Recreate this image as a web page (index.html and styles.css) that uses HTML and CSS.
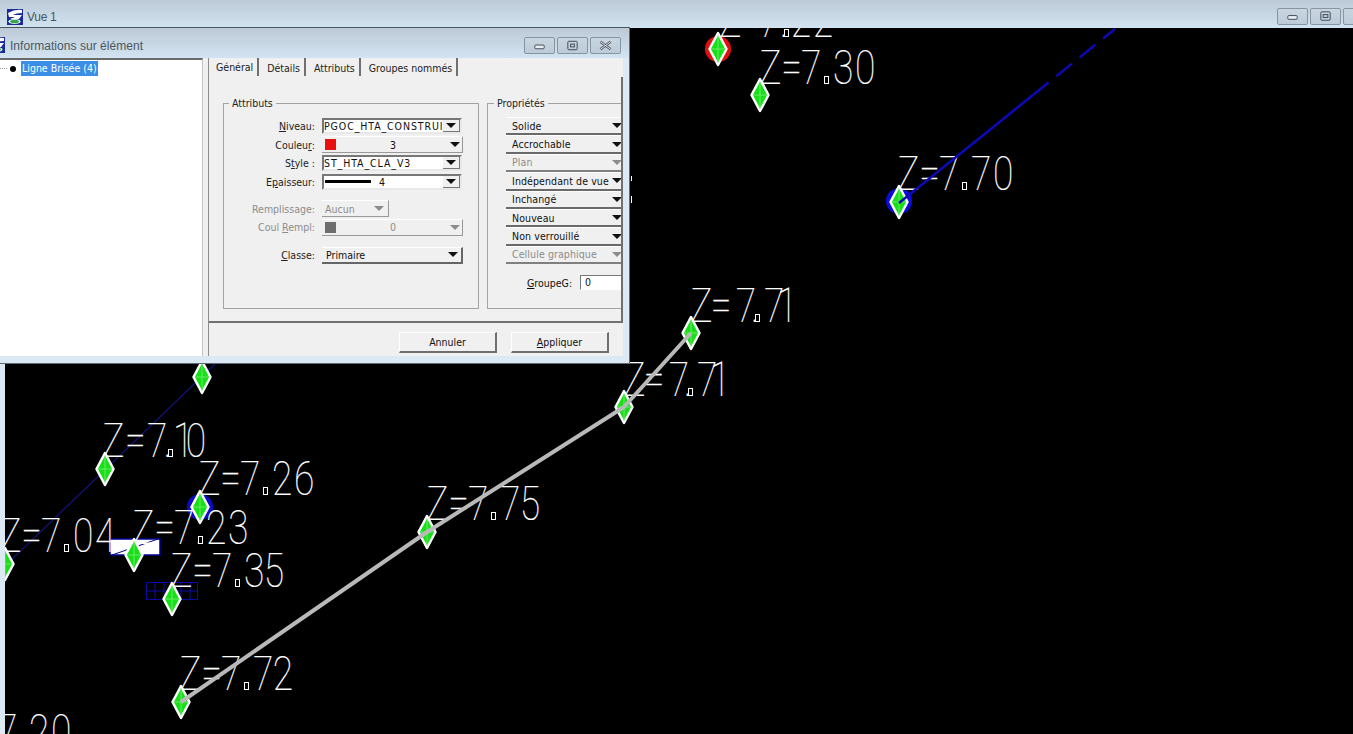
FILE: index.html
```html
<!DOCTYPE html>
<html lang="fr">
<head>
<meta charset="utf-8">
<title>Vue 1</title>
<link rel="stylesheet" href="styles.css">
</head>
<body>
<div class="view">
  <header class="view-bar">
    <svg class="app-icon" viewBox="0 0 16 16"><rect width="16" height="16" fill="#1a2a9a"/><path d="M1 4 Q8 0 15 1 L15 4 Q9 4 6 6 L15 6 L12 10 L3 10 L8 8 L2 8Z" fill="#fff"/><ellipse cx="7.500" cy="12.500" rx="6" ry="2.500" fill="#fff"/><ellipse cx="7.500" cy="12.500" rx="4.500" ry="1.800" fill="#2fa84a"/></svg>
    <span class="view-title">Vue 1</span>
    <div class="win-btns view-btns">
      <span class="win-btn"><svg viewBox="0 0 30 16"><rect x="10" y="7" width="10" height="4" rx="1" fill="#e8eef3" stroke="#3c4650"/></svg></span>
      <span class="win-btn"><svg viewBox="0 0 30 16"><rect x="10" y="3" width="10" height="9" rx="1" fill="none" stroke="#3c4650"/><rect x="12.500" y="6" width="5" height="3" fill="none" stroke="#3c4650"/></svg></span>
      <span class="win-btn"></span>
    </div>
  </header>
  <div class="canvas">
    <svg class="drawing" viewBox="5 28 1348 706">
      <g>
        <circle cx="718" cy="49" r="13" fill="#e01010"/>
        <circle cx="899" cy="201" r="13" fill="#0c0cd8"/>
        <circle cx="200" cy="507" r="13" fill="#0c0cc8"/>
      </g>
      <path class="line-navy" d="M5 566 L216 363"/>
      <rect x="110" y="539" width="50" height="16" fill="#fff" stroke="#000090" stroke-width="1.500"/>
      <path d="M112 555 L158 539" fill="none" stroke="#000090"/>
      <path class="grid-blue" d="M146.500 582.500H197.500V599.500H146.500Z M146.500 591H197.500 M155 582V600 M164 582V600 M172 582V600 M181 582V600 M190 582V600"/>
      <path class="tick" d="M631.500 176V181 M631.500 196V203"/>
      <g class="z">
        <text transform="translate(720 37) scale(.76 1)" x="-1 25 51 79 93 122">Z=7.22</text>
        <text transform="translate(760 84) scale(.76 1)" x="-1 28 54 82 96 125">Z=7.30</text>
        <text transform="translate(898 190) scale(.76 1)" x="-1 28 54 82 96 125">Z=7.70</text>
        <text transform="translate(691 322) scale(.76 1)" x="-1 26 59 79 96 113">Z=7.71</text>
        <text transform="translate(624 396) scale(.76 1)" x="-1 26 59 79 96 113">Z=7.71</text>
        <text transform="translate(427 520) scale(.76 1)" x="-1 28 54 82 96 122">Z=7.75</text>
        <text transform="translate(103 457) scale(.76 1)" x="-1 29 58 80 92 109">Z=7.10</text>
        <text transform="translate(199 495) scale(.76 1)" x="-1 28 54 82 96 125">Z=7.26</text>
        <text transform="translate(133 544) scale(.76 1)" x="-1 28 54 82 96 125">Z=7.23</text>
        <text transform="translate(0 552) scale(.76 1)" x="-1 28 54 82 96 125">Z=7.04</text>
        <text transform="translate(171 587) scale(.76 1)" x="-1 28 54 82 96 122">Z=7.35</text>
        <text transform="translate(180 690) scale(.76 1)" x="-1 28 54 82 96 122">Z=7.72</text>
        <text transform="translate(-44 748) scale(.76 1)" x="-1 28 54 82 96 125">Z=7.20</text>
        <text transform="translate(215 364) scale(.76 1)" x="-1 28 54 82 96 125">Z=7.04</text>
      </g>
      <g class="boxes">
        <rect x="784.500" y="29.500" width="4" height="7"/>
        <rect x="824.500" y="76.500" width="4" height="7"/>
        <rect x="962.500" y="182.500" width="4" height="7"/>
        <rect x="755.500" y="314.500" width="4" height="7"/>
        <rect x="688.500" y="388.500" width="4" height="7"/>
        <rect x="491.500" y="512.500" width="4" height="7"/>
        <rect x="168.500" y="449.500" width="4" height="7"/>
        <rect x="263.500" y="487.500" width="4" height="7"/>
        <rect x="198.500" y="536.500" width="4" height="7"/>
        <rect x="64.500" y="544.500" width="4" height="7"/>
        <rect x="235.500" y="579.500" width="4" height="7"/>
        <rect x="244.500" y="682.500" width="4" height="7"/>
      </g>
      <path class="line-blue" d="M899 203 L1033 95"/>
      <path class="line-blue dash" d="M1033 95 L1115 29"/>
      <defs>
        <g id="pt">
          <path d="M0 -16 L8.500 0 L0 16 L-8.500 0Z" fill="#18e018" stroke="#fff" stroke-width="2.500" stroke-linejoin="round"/>
          <path d="M0 -14V14 M-7 0H7" stroke="#8cec8c" stroke-width=".7"/>
        </g>
      </defs>
      <use href="#pt" x="718" y="49"/>
      <use href="#pt" x="760" y="95"/>
      <use href="#pt" x="899" y="202"/>
      <use href="#pt" x="691" y="333"/>
      <use href="#pt" x="624" y="407"/>
      <use href="#pt" x="427" y="532"/>
      <use href="#pt" x="202" y="377"/>
      <use href="#pt" x="105" y="469"/>
      <use href="#pt" x="200" y="507"/>
      <use href="#pt" x="134" y="555"/>
      <use href="#pt" x="172" y="599"/>
      <use href="#pt" x="181" y="702"/>
      <use href="#pt" x="5" y="564"/>
      <path class="line-blue" d="M899 203 L915 190"/>
      <path class="line-grey" d="M181 702 L427 532 L624 407 L691 333"/>
    </svg>
  </div>
</div>

<section class="dialog">
  <header class="dlg-bar">
    <svg class="app-icon dlg-icon" viewBox="0 0 16 16"><rect width="16" height="16" fill="#1a2a9a"/><path d="M1 4 Q8 0 15 1 L15 4 Q9 4 6 6 L15 6 L12 10 L3 10 L8 8 L2 8Z" fill="#fff"/><ellipse cx="7.500" cy="12.500" rx="6" ry="2.500" fill="#fff"/><ellipse cx="7.500" cy="12.500" rx="4.500" ry="1.800" fill="#2fa84a"/></svg>
    <span class="dlg-title">Informations sur élément</span>
    <div class="win-btns">
      <span class="win-btn"><svg viewBox="0 0 31 16"><rect x="10.500" y="7.500" width="10" height="4" rx="1" fill="#e8eef3" stroke="#3c4650"/></svg></span>
      <span class="win-btn"><svg viewBox="0 0 31 16"><rect x="10.500" y="3.500" width="10" height="9" rx="1" fill="none" stroke="#3c4650"/><rect x="13.500" y="6.500" width="4" height="3" fill="none" stroke="#3c4650"/></svg></span>
      <span class="win-btn"><svg viewBox="0 0 31 16"><path d="M10 4 L21 12 M21 4 L10 12" stroke="#4a5560" stroke-width="2.500" fill="none"/><path d="M10 4 L21 12 M21 4 L10 12" stroke="#e8eef3" stroke-width="1" fill="none"/></svg></span>
    </div>
  </header>
  <div class="dlg-body">
    <aside class="tree">
      <div class="tree-row"><span class="tree-dots"></span><span class="tree-bullet"></span><span class="tree-sel">Ligne Brisée (4)</span></div>
    </aside>
    <div class="panel">
      <nav class="tabs">
        <span class="tab active">Général</span>
        <span class="tab">Détails</span>
        <span class="tab">Attributs</span>
        <span class="tab">Groupes nommés</span>
      </nav>
      <div class="page">
        <fieldset class="group attrs">
          <legend>Attributs</legend>
          <div class="form-row"><label><u>N</u>iveau:</label><div class="sel"><span class="val">PGOC_HTA_CONSTRUI</span><span class="drop"><i class="tri"></i></span></div></div>
          <div class="form-row"><label>Couleu<u>r</u>:</label><div class="flat"><i class="swatch red"></i><span class="num">3</span><i class="tri"></i></div></div>
          <div class="form-row"><label>S<u>t</u>yle :</label><div class="sel"><span class="val">ST_HTA_CLA_V3</span><span class="drop"><i class="tri"></i></span></div></div>
          <div class="form-row"><label>E<u>p</u>aisseur:</label><div class="sel"><span class="val weight"><i class="stroke"></i>4</span><span class="drop"><i class="tri"></i></span></div></div>
          <div class="form-row off gap-a"><label>Remplissage:</label><div class="flat short"><span class="val">Aucun</span><i class="tri"></i></div></div>
          <div class="form-row off"><label>Coul <u>R</u>empl:</label><div class="flat"><i class="swatch grey"></i><span class="num">0</span><i class="tri"></i></div></div>
          <div class="form-row gap-b"><label><u>C</u>lasse:</label><div class="flat dark"><span class="val">Primaire</span><i class="tri"></i></div></div>
        </fieldset>
        <fieldset class="group props">
          <legend>Propriétés</legend>
          <div class="prop">Solide<i class="tri"></i></div>
          <div class="prop">Accrochable<i class="tri"></i></div>
          <div class="prop off">Plan<i class="tri"></i></div>
          <div class="prop">Indépendant de vue<i class="tri"></i></div>
          <div class="prop">Inchangé<i class="tri"></i></div>
          <div class="prop">Nouveau<i class="tri"></i></div>
          <div class="prop">Non verrouillé<i class="tri"></i></div>
          <div class="prop off">Cellule graphique<i class="tri"></i></div>
          <div class="groupg"><label><u>G</u>roupeG:</label><span class="gg-input">0</span></div>
        </fieldset>
      </div>
      <footer class="actions">
        <button class="btn" type="button">Annuler</button>
        <button class="btn" type="button"><u>A</u>ppliquer</button>
      </footer>
    </div>
  </div>
</section>
</body>
</html>
```
FILE: styles.css
```css
* { box-sizing: border-box; }
html, body { margin: 0; height: 100%; }
body {
  width: 1353px; height: 734px; overflow: hidden; position: relative;
  background: #000;
  font: 12px "Liberation Sans", Arial, sans-serif;
  color: #111;
}
.view { display: flex; flex-direction: column; height: 734px; }
.view-bar {
  height: 28px; display: flex; align-items: center; padding: 5px 0 0 7px; gap: 4px;
  background: linear-gradient(#bccad6, #d2e3f1);
  flex: none;
}
.app-icon { width: 16px; height: 16px; display: block; flex: none; }
.view-title { color: #4b5661; font-size: 12px; letter-spacing: -.3px; }
.win-btns { margin-left: auto; display: flex; gap: 2px; }
.view-btns { margin-right: -21px; }
.win-btn {
  width: 31px; height: 17px; display: block;
  border: 1px solid #8795a3; border-radius: 2px;
  background: linear-gradient(#c9d6e1, #bccbd8);
}
.win-btn svg { display: block; width: 100%; height: 100%; }
.canvas { flex: 1; border-left: 5px solid #dce9f3; position: relative; overflow: hidden; }
.drawing { position: absolute; inset: 0; width: 1348px; height: 706px; display: block; }
.z text {
  font: 100 49px Roboto, "Liberation Sans", sans-serif;
  fill: #fff; stroke: #fff; stroke-width: .2px;
}
.boxes rect { fill: #000; stroke: #fff; stroke-width: 1; }
.tick { stroke: #fff; stroke-width: 1; fill: none; }
.line-navy { stroke: #10106a; stroke-width: 1.500; fill: none; }
.grid-blue { stroke: #0c0ca8; stroke-width: 1; fill: none; }
.line-blue { stroke: #0a0ab8; stroke-width: 2.500; fill: none; }
.line-blue.dash { stroke-dasharray: 20 10; }
.line-grey { stroke: #b9b9b9; stroke-width: 4; fill: none; stroke-linejoin: round; }

.dialog {
  position: absolute; left: 0; top: 27px; width: 630px; height: 337px;
  background: #dce9f3;
  border-top: 1px solid #4a5660;
  border-right: 1px solid #5d6a75;
  border-bottom: 1px solid #5d6a75;
  display: flex; flex-direction: column;
}
.dlg-bar {
  height: 30px; flex: none; display: flex; align-items: center;
  padding: 4px 8px 0 0; gap: 5px;
  background: linear-gradient(#bccad6, #d2e3f1);
}
.dlg-icon { margin-left: -11px; }
.dlg-title { color: #4b5661; font-size: 12px; letter-spacing: .04px; margin-top: 2px; }
.dlg-body {
  flex: 1; display: flex; margin: 0 6px 7px 0; background: #f0f0f0; min-height: 0;
  font-family: "DejaVu Sans Condensed", "DejaVu Sans", sans-serif;
  font-size: 10.500px; font-stretch: condensed;
}

.tree {
  width: 203px; flex: none; background: #fff;
  border-top: 2px solid #6a6a6a; border-right: 1px solid #c4c4c4;
  padding-top: 1px;
}
.tree-row { display: flex; align-items: center; height: 15px; }
.tree-dots { width: 7px; margin-right: 3px; border-top: 1px dotted #999; }
.tree-bullet { width: 6px; height: 6px; border-radius: 50%; background: #000; margin-right: 5px; }
.tree-sel { background: #3a8ee6; color: #fff; padding: 0 1px; line-height: 15px; }

.panel {
  flex: 1; margin-left: 5px; border-left: 1px solid #8c8c8c;
  display: flex; flex-direction: column; min-width: 0;
}
.tabs { height: 19px; flex: none; display: flex; padding: 0 0 0 7px; }
.tab {
  padding: 3px 4px 0 0; margin-right: 8px; height: 18px; line-height: 15px;
  border-right: 2px solid #707070; color: #222; white-space: nowrap;
}
.tab.active { padding-top: 2px; }
.page {
  flex: 1; display: flex; gap: 8px; padding: 19px 0 0 14px;
  border-right: 2px solid #707070; min-height: 0; overflow: hidden;
}
.group {
  margin: 0; padding: 0; min-width: 0; height: 213px; flex: none;
  border: 1px solid #a3a3a3;
  background: none;
}
.group legend { margin-left: 5px; padding: 0 3px; line-height: 14px; color: #222; }
.attrs { width: 256px; padding-top: 7px; }
.props { width: 138px; padding-top: 7px; background: #f0f0f0; margin-right: -2px; }
.props legend { margin-left: 6px; }
.form-row { display: flex; align-items: center; height: 18.500px; gap: 7px; }
.form-row label { width: 91px; text-align: right; color: #222; white-space: nowrap; }
.gap-a { margin-top: 8.500px; }
.gap-b { margin-top: 9.500px; }
.sel {
  width: 140px; height: 16px; display: flex; align-items: center; justify-content: space-between;
  background: #fff;
  border: 2px solid; border-color: #777 #e8e8e8 #e8e8e8 #777;
}
.sel .val { white-space: nowrap; letter-spacing: .9px; }
.weight { display: flex; align-items: center; }
.stroke { width: 46px; height: 3px; background: #000; margin: 0 8px 0 1px; }
.drop {
  width: 17px; height: 12px; flex: none; display: flex; align-items: center; justify-content: center;
  background: #f0f0f0; border-right: 1px solid #777; border-bottom: 1px solid #777;
}
.flat {
  width: 141px; height: 17px; display: flex; align-items: center; padding: 0 1px 0 3px;
  background: #f0f0f0; border-bottom: 1px solid #999; border-right: 1px solid #999; border-top: 1px solid #fff;
}
.flat.short { width: 67px; }
.flat.dark { border-bottom: 2px solid #666; border-right: 2px solid #666; padding-left: 4px; }
.flat .val { flex: 1; }
.flat .tri { flex: none; margin-right: 1px; }
.flat.short .tri { margin-right: 3px; }
.flat.dark .tri { margin-right: 2px; }
.num { flex: 1; text-align: center; }
.swatch { width: 11px; height: 11px; flex: none; display: block; }
.swatch.red { background: #e80f0f; }
.swatch.grey { background: #6e6e6e; }
.tri {
  display: block; width: 0; height: 0;
  border-left: 5px solid transparent; border-right: 5px solid transparent; border-top: 5px solid #111;
}
.off, .off label { color: #8c8c8c; }
.off .tri { border-top-color: #8c8c8c; }
.prop {
  width: 117px; height: 18.400px; margin-left: 18px; display: flex; align-items: center; justify-content: space-between;
  padding: 0 1px 0 6px; background: #f0f0f0; white-space: nowrap;
  border-bottom: 2px solid #6a6a6a; border-top: 1px solid #fff; letter-spacing: .1px;
}
.prop.off { border-bottom-color: #808080; }
.groupg { display: flex; align-items: center; gap: 8px; margin: 11px 0 0 39px; }
.gg-input {
  width: 60px; height: 15px; background: #fff; padding-left: 4px; line-height: 13px;
  border: 1px solid; border-color: #777 #fff #fff #777;
  flex: none;
}
.actions {
  height: 35px; flex: none; display: flex; padding: 9px 14px 0 190px; gap: 14px;
  border-top: 2px solid #707070;
}
.btn {
  width: 98px; height: 21px; padding: 0; background: #f0f0f0; color: #111; font: inherit;
  border: 0; border-right: 2px solid #6e6e6e; border-bottom: 2px solid #6e6e6e; border-top: 1px solid #fff; border-left: 1px solid #fff;
}
```
